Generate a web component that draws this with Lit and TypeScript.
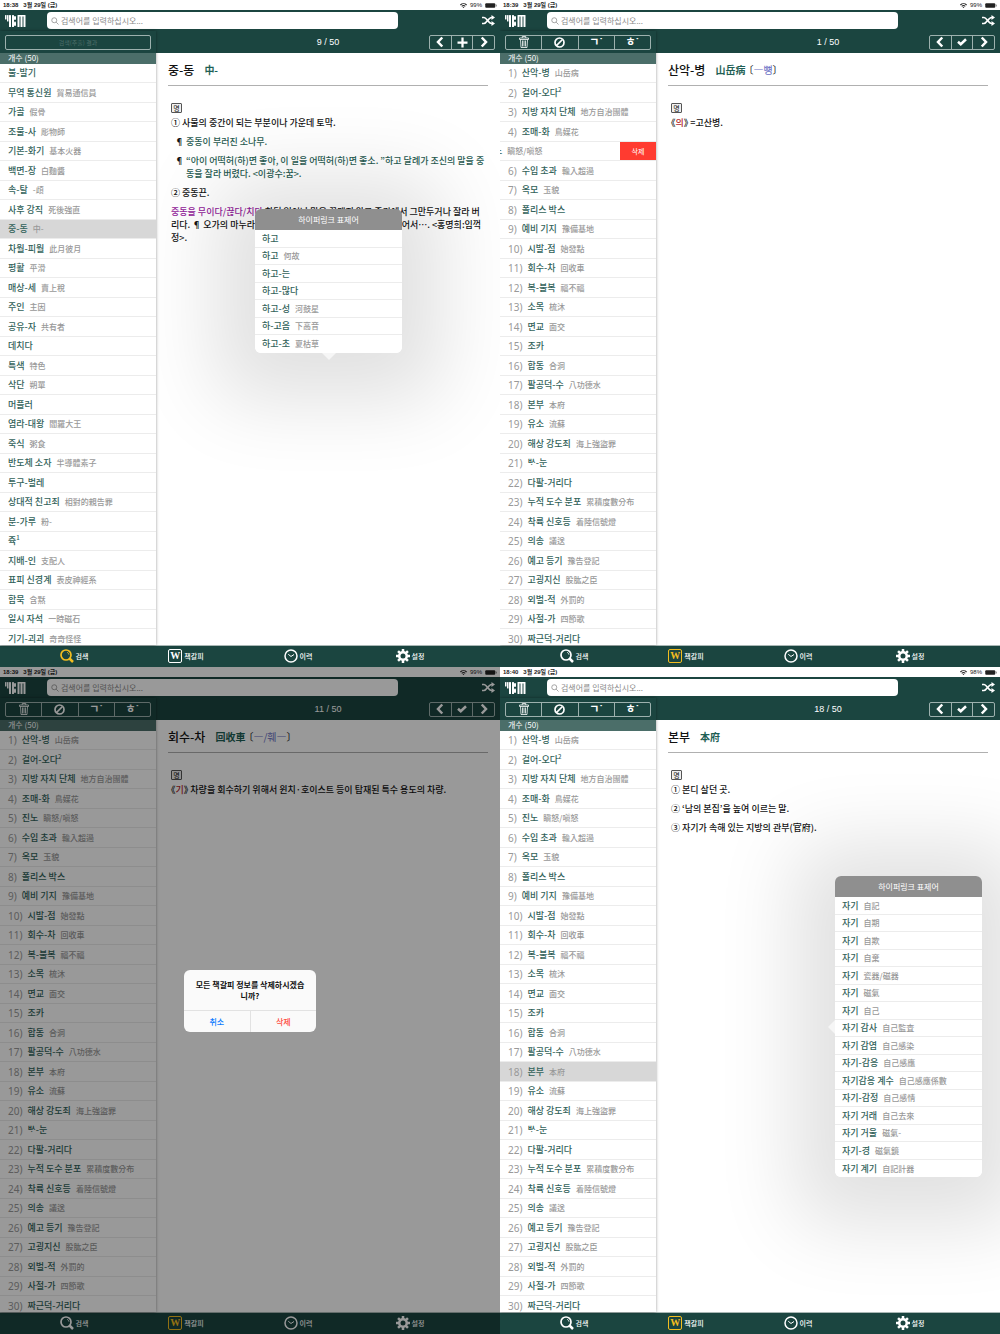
import { LitElement, html, css, svg, nothing } from "lit";
import { customElement, property } from "lit/decorators.js";
import { classMap } from "lit/directives/class-map.js";

type Entry = [word: string, hanja?: string, sup?: string];

interface ScreenData {
  time: string;
  battery: string;
  position: string;
  mode: "search" | "bookmark";
  entries: Entry[];
  selected?: number;
  swiped?: number;
  article: unknown;
  popover?: { kind: "below" | "side"; entries: Entry[] };
  confirm?: boolean;
}

const results: Entry[] = [
  ["불-발기"],
  ["무역 통신원", "貿易通信員"],
  ["가골", "假骨"],
  ["조물-사", "彫物師"],
  ["기본-화기", "基本火器"],
  ["백면-장", "白麵醬"],
  ["속-탈", "-頉"],
  ["사후 강직", "死後強直"],
  ["중-동", "中-"],
  ["차월-피월", "此月彼月"],
  ["평활", "平滑"],
  ["매상-세", "賣上稅"],
  ["주인", "主因"],
  ["공유-자", "共有者"],
  ["데치다"],
  ["특색", "特色"],
  ["삭단", "朔單"],
  ["머플러"],
  ["염라-대왕", "閻羅大王"],
  ["죽식", "粥食"],
  ["반도체 소자", "半導體素子"],
  ["투구-벌레"],
  ["상대적 친고죄", "相對的親告罪"],
  ["분-가루", "粉-"],
  ["쥭", "", "1"],
  ["지배-인", "支配人"],
  ["표피 신경계", "表皮神經系"],
  ["함묵", "含黙"],
  ["일시 자석", "一時磁石"],
  ["기기-괴괴", "奇奇怪怪"],
];

const bookmarks: Entry[] = [
  ["산악-병", "山岳病"],
  ["걸어-오다", "", "2"],
  ["지방 자치 단체", "地方自治團體"],
  ["조매-화", "鳥媒花"],
  ["진노", "瞋怒/嗔怒"],
  ["수입 초과", "輸入超過"],
  ["옥모", "玉貌"],
  ["폴리스 박스"],
  ["예비 기지", "豫備基地"],
  ["시발-점", "始發點"],
  ["회수-차", "回收車"],
  ["복-불복", "福不福"],
  ["소목", "梳沐"],
  ["면교", "面交"],
  ["조카"],
  ["합동", "合洞"],
  ["팔공덕-수", "八功德水"],
  ["본부", "本府"],
  ["유소", "流蘇"],
  ["해상 강도죄", "海上強盜罪"],
  ["ᄡᆞ-눈"],
  ["다팔-거리다"],
  ["누적 도수 분포", "累積度數分布"],
  ["착륙 신호등", "着陸信號燈"],
  ["의송", "議送"],
  ["예고 등기", "豫告登記"],
  ["고굉지신", "股肱之臣"],
  ["외벌-적", "外罰的"],
  ["사절-가", "四節歌"],
  ["짜근덕-거리다"],
];

const hagoLinks: Entry[] = [
  ["하고"],
  ["하고", "何故"],
  ["하고-는"],
  ["하고-많다"],
  ["하고-성", "河鼓星"],
  ["하-고음", "下高音"],
  ["하고-초", "夏枯草"],
];

const jagiLinks: Entry[] = [
  ["자기", "自記"],
  ["자기", "自期"],
  ["자기", "自欺"],
  ["자기", "自棄"],
  ["자기", "瓷器/磁器"],
  ["자기", "磁氣"],
  ["자기", "自己"],
  ["자기 감사", "自己監査"],
  ["자기 감염", "自己感染"],
  ["자기-감응", "自己感應"],
  ["자기감응 계수", "自己感應係數"],
  ["자기-감정", "自己感情"],
  ["자기 거래", "自己去來"],
  ["자기 거울", "磁氣-"],
  ["자기-경", "磁氣鏡"],
  ["자기 계기", "自記計器"],
];

const screens: ScreenData[] = [
  {
    time: "18:38",
    battery: "99%",
    position: "9 / 50",
    mode: "search",
    entries: results,
    selected: 8,
    article: html`
      <h1 class="title">중-동 <span class="origin">中-</span></h1>
      <div class="senses">
        <span class="pos">명</span>
        <p>① 사물의 중간이 되는 부분이나 가운데 토막.</p>
        <p class="example"><span>¶</span><span>중동이 부러진 소나무.</span></p>
        <p class="example">
          <span>¶</span
          ><span>“아이 어떡허(하)면 좋아, 이 일을 어떡허(하)면 좋소. ”하고 달례가 조신의 말을 중<br />동을 잘라 버렸다. &lt;이광수:꿈&gt;.</span>
        </p>
        <p>② 중동끈.</p>
        <p>
          <span class="idiom">중동을 무이다/끊다/치다</span> 하던 일이나 말을 끝맺지 않고 중간에서 그만두거나 잘라
          버리다. ¶ 오가의 마누라가 말 중동을 무이고 한참 동안 말없이 두어서…. &lt;홍명희:임꺽정&gt;.
        </p>
      </div>
    `,
    popover: { kind: "below", entries: hagoLinks },
  },
  {
    time: "18:39",
    battery: "99%",
    position: "1 / 50",
    mode: "bookmark",
    entries: bookmarks,
    swiped: 4,
    article: html`
      <h1 class="title">
        산악-병 <span class="origin">山岳病</span><span class="sound">〔<em>―뼝</em>〕</span>
      </h1>
      <div class="senses">
        <span class="pos">명</span>
        <p><span class="field">《<em>의</em>》</span> =고산병.</p>
      </div>
    `,
  },
  {
    time: "18:39",
    battery: "99%",
    position: "11 / 50",
    mode: "bookmark",
    entries: bookmarks,
    article: html`
      <h1 class="title">
        회수-차 <span class="origin">回收車</span><span class="sound">〔<em>―/훼―</em>〕</span>
      </h1>
      <div class="senses">
        <span class="pos">명</span>
        <p>
          <span class="field">《<em>기</em>》</span> 차량을 회수하기 위해서 윈치·호이스트 등이 탑재된 특수 용도의 차량.
        </p>
      </div>
    `,
    confirm: true,
  },
  {
    time: "18:40",
    battery: "98%",
    position: "18 / 50",
    mode: "bookmark",
    entries: bookmarks,
    selected: 17,
    article: html`
      <h1 class="title">본부 <span class="origin">本府</span></h1>
      <div class="senses">
        <span class="pos">명</span>
        <p>① 본디 살던 곳.</p>
        <p>② ‘남의 본집’을 높여 이르는 말.</p>
        <p>③ 자기가 속해 있는 지방의 관부(官府).</p>
      </div>
    `,
    popover: { kind: "side", entries: jagiLinks },
  },
];

const icon = (name: string, width: number, height: number, box: string, body: unknown) => html`
  <svg class="icon ${name}" width=${width} height=${height} viewBox=${box} aria-hidden="true">${body}</svg>
`;

const logo = icon(
  "logo", 21, 12, "0 0 42 24",
  svg`<g fill="currentColor">
    <rect x="0" y="0" width="3" height="9" rx="1"/>
    <rect x="4" y="0" width="3" height="13" rx="1"/>
    <rect x="8" y="0" width="4" height="24" rx="1"/>
    <rect x="14" y="0" width="4" height="24" rx="1"/>
    <rect x="18" y="2" width="4" height="8" rx="2"/>
    <rect x="18" y="13" width="4" height="9" rx="2"/>
    <rect x="25" y="0" width="4" height="24" rx="1"/>
    <rect x="31" y="0" width="4" height="24" rx="1"/>
    <rect x="37" y="0" width="4" height="24" rx="1"/>
    <rect x="26" y="0" width="14" height="3"/>
  </g>`,
);

const wifiIcon = icon(
  "wifi", 7, 5, "0 0 14 10",
  svg`<path d="M0 3.2a10 10 0 0 1 14 0l-1.6 1.7a7.6 7.6 0 0 0-10.8 0zM2.7 6a6.2 6.2 0 0 1 8.6 0L9.8 7.5a4 4 0 0 0-5.6 0zM5.200 8.400a2.600 2.600 0 0 1 3.600 0L7 10z" fill="currentColor"/>`,
);

const batteryIcon = icon(
  "battery", 12, 5, "0 0 24 10",
  svg`<rect x=".5" y=".5" width="20" height="9" rx="2" fill="currentColor"/><rect x="21.500" y="3" width="2" height="4" rx="1" fill="currentColor" opacity=".6"/>`,
);

const lensIcon = icon(
  "lens", 8, 8, "0 0 16 16",
  svg`<circle cx="6.500" cy="6.500" r="5" fill="none" stroke="currentColor" stroke-width="1.500"/><path d="M10.300 10.300 15 15" stroke="currentColor" stroke-width="1.500"/>`,
);

const shuffleIcon = icon(
  "shuffle", 13, 11, "0 0 26 22",
  svg`<g fill="none" stroke="currentColor" stroke-width="3.400"><path d="M0 5h4c5 0 9 12 15 12h3"/><path d="M0 17h4c5 0 9-12 15-12h3"/></g><path d="M19 0l7 5-7 5zM19 12l7 5-7 5z" fill="currentColor"/>`,
);

const leftIcon = icon("left", 10, 12, "0 0 20 24", svg`<path d="M14.500 3 6 12l8.500 9" fill="none" stroke="currentColor" stroke-width="5"/>`);
const rightIcon = icon("right", 10, 12, "0 0 20 24", svg`<path d="M5.500 3 14 12l-8.500 9" fill="none" stroke="currentColor" stroke-width="5"/>`);
const plusIcon = icon("plus", 11, 11, "0 0 22 22", svg`<path d="M11 1v20M1 11h20" stroke="currentColor" stroke-width="4.500"/>`);
const checkIcon = icon("check", 10, 8, "0 0 20 16", svg`<path d="M2 7.500 7.500 12.500 18 2.500" fill="none" stroke="currentColor" stroke-width="5"/>`);

const trashIcon = icon(
  "trash", 10, 12, "0 0 20 24",
  svg`<g fill="none" stroke="currentColor" stroke-width="1.600"><path d="M6.500 4V1h7v3M1 7V4h18v3zM3 7l1 16h12l1-16M7 9v12M10 9v12M13 9v12"/></g>`,
);

const banIcon = icon(
  "ban", 11, 11, "0 0 22 22",
  svg`<g fill="none" stroke="currentColor" stroke-width="3.400"><circle cx="11" cy="11" r="9"/><path d="M17 5 5 17"/></g>`,
);

const tabIcons = {
  search: icon(
    "tab-search", 14, 14, "0 0 28 28",
    svg`<g fill="none" stroke="currentColor"><circle cx="12" cy="12" r="10" stroke-width="3.400"/><path d="M14 6.500a6 6 0 0 1 4 5" stroke-width="1.500"/><path d="M19 19l7 7" stroke-width="5"/></g>`,
  ),
  bookmark: html`<span class="icon tab-mark" aria-hidden="true">W</span>`,
  history: icon(
    "tab-history", 14, 14, "0 0 28 28",
    svg`<g fill="none" stroke="currentColor"><circle cx="14" cy="14" r="12" stroke-width="3"/><path d="M8.500 10.500 14 15l6-4" stroke-width="2"/></g>`,
  ),
  settings: icon(
    "tab-settings", 14, 14, "0 0 28 28",
    svg`<g fill="none" stroke="currentColor"><circle cx="14" cy="14" r="7.500" stroke-width="5"/><path d="M14 0v6M14 22v6M0 14h6M22 14h6M4.100 4.100l4.300 4.300M19.600 19.600l4.300 4.300M4.100 23.900l4.300-4.300M19.600 8.400l4.300-4.300" stroke-width="5"/></g>`,
  ),
};

const shared = css`
  * {
    box-sizing: border-box;
  }
  button {
    margin: 0;
    padding: 0;
    border: 0;
    background: none;
    color: inherit;
    font: inherit;
    text-align: inherit;
  }
  .icon {
    display: block;
    flex: none;
  }
`;

@customElement("entry-label")
class EntryLabel extends LitElement {
  static styles = css`
    :host {
      display: flex;
      align-items: center;
      gap: 5px;
      white-space: nowrap;
      font-weight: 500;
      line-height: 12px;
    }
    .word {
      color: #32625a;
      font-size: 9px;
    }
    .hanja {
      color: #999;
      font-size: 8px;
    }
    sup {
      font-size: 6px;
      line-height: 0;
    }
  `;
  @property({ attribute: false }) entry: Entry = [""];

  render() {
    const [word, hanja, sup] = this.entry;
    return html`
      <span class="word">${word}${sup ? html`<sup>${sup}</sup>` : nothing}</span>
      ${hanja ? html`<span class="hanja">${hanja}</span>` : nothing}
    `;
  }
}

@customElement("link-popover")
class LinkPopover extends LitElement {
  static styles = [
    shared,
    css`
      :host {
        position: absolute;
        width: 147px;
        border-radius: 6px;
        box-shadow: 0 8px 80px 40px rgba(0, 0, 0, 0.12);
      }
      .heading {
        margin: 0;
        border-radius: 6px 6px 0 0;
        background: #8f8f8f;
        color: #fff;
        font-size: 8px;
        font-weight: 400;
        line-height: 21px;
        text-align: center;
      }
      .links {
        margin: 0;
        padding: 0;
        list-style: none;
        overflow: hidden;
        border-radius: 0 0 6px 6px;
        background: #fff;
      }
      .link {
        display: flex;
        align-items: center;
        width: 100%;
        height: 18px;
        padding: 0 7px;
        border-bottom: 1px solid #ececec;
      }
      li:nth-child(even) .link {
        height: 17px;
      }
      li:last-child .link {
        border-bottom: 0;
      }
      .arrow {
        position: absolute;
        border: 7px solid transparent;
      }
      .arrow.below {
        top: 100%;
        left: 50%;
        margin-left: -7px;
        border-top-color: #f6f6f6;
        border-bottom: 0;
      }
      .arrow.side {
        top: 50%;
        right: 100%;
        margin-top: -7px;
        border-right-color: #f6f6f6;
        border-left: 0;
      }
    `,
  ];
  @property() kind = "below";
  @property({ attribute: false }) entries: Entry[] = [];

  render() {
    return html`
      <h2 class="heading">하이퍼링크 표제어</h2>
      <ul class="links">
        ${this.entries.map(
          (entry) => html`<li><button class="link"><entry-label .entry=${entry}></entry-label></button></li>`,
        )}
      </ul>
      <span class=${classMap({ arrow: true, [this.kind]: true })}></span>
    `;
  }
}

@customElement("dictionary-screen")
class DictionaryScreen extends LitElement {
  static styles = [
    shared,
    css`
      :host {
        position: relative;
        display: flex;
        flex-direction: column;
        min-width: 0;
        min-height: 0;
        overflow: hidden;
        background: #fff;
      }
      .status {
        display: flex;
        align-items: center;
        gap: 5px;
        height: 10px;
        padding: 0 3px;
        color: #222;
        font-family: "Liberation Sans", "Noto Sans CJK KR", sans-serif;
        font-size: 6px;
        font-weight: 700;
        line-height: 10px;
      }
      .status .wifi {
        margin-left: auto;
      }
      .level {
        margin: 0 -2px;
        font-weight: 400;
      }
      .header {
        display: flex;
        align-items: center;
        height: 21px;
        padding: 0 5px;
        background: #1b4540;
        color: #fff;
      }
      .header .logo {
        margin-right: 21px;
      }
      .search {
        display: flex;
        flex: 1;
        align-items: center;
        gap: 2px;
        height: 17px;
        margin-right: 84px;
        padding: 0 4px;
        border-radius: 4px;
        background: #fff;
        color: #8a8a8a;
      }
      .search input {
        flex: 1;
        min-width: 0;
        height: 17px;
        padding: 0;
        border: 0;
        outline: 0;
        background: none;
        font: inherit;
        font-size: 8px;
      }
      .search input::placeholder {
        color: #8a8a8a;
      }
      .body {
        display: flex;
        flex: 1;
        min-height: 0;
      }
      .sidebar {
        z-index: 1;
        display: flex;
        flex: none;
        flex-direction: column;
        width: 156px;
        overflow: hidden;
        background: #fff;
        box-shadow: 0 0 3px rgba(0, 0, 0, 0.4);
      }
      .main {
        display: flex;
        flex: 1;
        flex-direction: column;
        min-width: 0;
      }
      .toolbar {
        display: flex;
        flex: none;
        align-items: center;
        height: 22px;
        padding: 0 5px;
        background: #1b4540;
        color: #fff;
      }
      .main .toolbar {
        display: grid;
        grid-template-columns: 1fr auto 1fr;
      }
      .group {
        display: flex;
        flex: 1;
        height: 15px;
        border: 1px solid #9db1ae;
        border-radius: 2px;
      }
      .group.nav {
        justify-self: end;
        width: 66px;
      }
      .group button {
        display: flex;
        flex: 1;
        align-items: center;
        justify-content: center;
      }
      .group button + button {
        border-left: 1px solid #9db1ae;
      }
      .caption {
        color: #4d6f6a;
        font-size: 6px;
      }
      .jamo {
        font-family: "Liberation Sans", "Noto Sans CJK KR", sans-serif;
        font-size: 11px;
        font-weight: 700;
        line-height: 13px;
      }
      .position {
        grid-column: 2;
        font-family: "Liberation Sans", sans-serif;
        font-size: 9px;
      }
      .count {
        flex: none;
        height: 11px;
        margin: 0;
        padding: 0 8px;
        background: #4b6e69;
        color: #fff;
        font-size: 8px;
        font-weight: 400;
        line-height: 10px;
      }
      .list {
        flex: 1;
        min-height: 0;
        margin: 0;
        padding: 0;
        overflow: hidden;
        list-style: none;
      }
      .item {
        display: flex;
        height: 20px;
        border-bottom: 1px solid #ececec;
      }
      .item:nth-child(odd) {
        height: 19px;
      }
      .item.selected {
        background: #d7d7d7;
      }
      .row {
        display: flex;
        flex: 1;
        align-items: center;
        gap: 5px;
        min-width: 0;
        padding: 0 8px;
      }
      .swiped .row {
        margin-left: -36px;
      }
      .number {
        color: #999;
        font-family: "Noto Sans", sans-serif;
        font-size: 10px;
        line-height: 12px;
      }
      .delete {
        width: 36px;
        background: #ff3b30;
        color: #fff;
        font-size: 7px;
        text-align: center;
      }
      .pane {
        position: relative;
        flex: 1;
        min-height: 0;
        overflow: hidden;
        padding: 0 12px;
        color: #111;
      }
      .title {
        display: flex;
        align-items: center;
        height: 33px;
        margin: 0 0 17px;
        border-bottom: 1px solid #b0b0b0;
        font-size: 12px;
        font-weight: 500;
      }
      .origin {
        margin-left: 10px;
        color: #1f5f55;
        font-size: 10px;
        font-weight: 700;
      }
      .sound {
        margin-left: 3px;
        font-size: 10px;
        font-weight: 400;
        font-feature-settings: "halt";
      }
      em {
        font-style: normal;
      }
      .sound em {
        color: #6a6fc4;
      }
      .senses {
        display: flex;
        flex-direction: column;
        gap: 6px;
        padding: 0 0 0 3px;
        font-size: 9px;
        font-weight: 500;
        line-height: 13px;
      }
      .pos {
        width: 11px;
        height: 10px;
        margin-bottom: -3px;
        border: 1px solid #555;
        border-radius: 1px;
        background: #f0f0f0;
        font-size: 7px;
        font-weight: 400;
        line-height: 8px;
        text-align: center;
      }
      p {
        margin: 0;
      }
      .example {
        display: flex;
        gap: 2px;
        padding-left: 4px;
        color: #1f5a50;
      }
      .example span:first-child {
        color: #111;
      }
      .idiom {
        color: #92219a;
      }
      .field {
        font-feature-settings: "halt";
      }
      .field em {
        color: #b3262b;
      }
      link-popover.below {
        top: 156px;
        left: 99px;
      }
      link-popover.side {
        top: 156px;
        right: 18px;
      }
      .tabs {
        display: grid;
        flex: none;
        grid-template-columns: repeat(4, 1fr);
        height: 22px;
        padding: 0 34px 1px 18px;
        border-top: 1px solid #a9b7b5;
        background: #1b4540;
        color: #fff;
      }
      .tab {
        display: flex;
        align-items: center;
        justify-content: center;
        gap: 2px;
        font-size: 7px;
        font-weight: 500;
      }
      .tab.active .icon {
        color: #f3bd1f;
      }
      .tab-mark {
        width: 14px;
        height: 14px;
        border: 1px solid currentColor;
        border-radius: 2px;
        font-family: "Liberation Serif", serif;
        font-size: 10px;
        font-weight: 700;
        line-height: 12px;
        text-align: center;
      }
      .shade {
        position: absolute;
        inset: 0;
        z-index: 2;
        display: flex;
        align-items: center;
        justify-content: center;
        background: rgba(0, 0, 0, 0.4);
      }
      .alert {
        width: 132px;
        overflow: hidden;
        border-radius: 6px;
        background: #fafafa;
        color: #111;
      }
      .message {
        padding: 9px 10px;
        font-size: 8px;
        font-weight: 700;
        line-height: 11px;
        text-align: center;
      }
      .actions {
        display: flex;
        height: 22px;
        border-top: 1px solid #e2e2e2;
      }
      .actions button {
        flex: 1;
        font-size: 8px;
        font-weight: 500;
        text-align: center;
      }
      .cancel {
        color: #0a7aff;
      }
      .actions .confirm {
        border-left: 1px solid #e2e2e2;
        color: #ff4a40;
      }
    `,
  ];
  @property({ attribute: false }) data!: ScreenData;

  private renderFilters() {
    if (this.data.mode === "search") {
      return html`<div class="group"><button><span class="caption">검색(추출) 결과</span></button></div>`;
    }
    return html`
      <div class="group">
        <button aria-label="삭제">${trashIcon}</button>
        <button aria-label="해제">${banIcon}</button>
        <button><span class="jamo">ㄱ˙</span></button>
        <button><span class="jamo">ㅎ˙</span></button>
      </div>
    `;
  }

  private renderItem(entry: Entry, index: number) {
    const { mode, selected, swiped } = this.data;
    return html`
      <li class=${classMap({ item: true, selected: index === selected, swiped: index === swiped })}>
        <button class="row">
          ${mode === "bookmark" ? html`<span class="number">${index + 1})</span>` : nothing}
          <entry-label .entry=${entry}></entry-label>
        </button>
        ${index === swiped ? html`<button class="delete">삭제</button>` : nothing}
      </li>
    `;
  }

  private renderTab(name: keyof typeof tabIcons, label: string) {
    return html`
      <button class=${classMap({ tab: true, active: this.data.mode === name })}>${tabIcons[name]}${label}</button>
    `;
  }

  render() {
    const { time, battery, position, mode, entries, article, popover, confirm } = this.data;
    return html`
      <div class="status">
        <span>${time}</span><span>3월 29일 (금)</span>${wifiIcon}<span class="level">${battery}</span>${batteryIcon}
      </div>
      <header class="header">
        ${logo}
        <label class="search">
          ${lensIcon}<input type="text" placeholder="검색어를 입력하십시오..." aria-label="검색어" />
        </label>
        <button aria-label="무작위">${shuffleIcon}</button>
      </header>
      <div class="body">
        <aside class="sidebar">
          <div class="toolbar">${this.renderFilters()}</div>
          <h2 class="count">개수 (50)</h2>
          <ul class="list">
            ${entries.map((entry, index) => this.renderItem(entry, index))}
          </ul>
        </aside>
        <main class="main">
          <div class="toolbar">
            <span class="position">${position}</span>
            <div class="group nav">
              <button aria-label="이전">${leftIcon}</button>
              <button aria-label="책갈피">${mode === "search" ? plusIcon : checkIcon}</button>
              <button aria-label="다음">${rightIcon}</button>
            </div>
          </div>
          <article class="pane">
            ${article}
            ${popover
              ? html`<link-popover class=${popover.kind} kind=${popover.kind} .entries=${popover.entries}></link-popover>`
              : nothing}
          </article>
        </main>
      </div>
      <nav class="tabs">
        ${this.renderTab("search", "검색")} ${this.renderTab("bookmark", "책갈피")}
        ${this.renderTab("history", "이력")} ${this.renderTab("settings", "설정")}
      </nav>
      ${confirm
        ? html`
            <div class="shade">
              <div class="alert" role="alertdialog">
                <div class="message">모든 책갈피 정보를 삭제하시겠습니까?</div>
                <div class="actions">
                  <button class="cancel">취소</button>
                  <button class="confirm">삭제</button>
                </div>
              </div>
            </div>
          `
        : nothing}
    `;
  }
}

@customElement("app-root")
class AppRoot extends LitElement {
  static styles = css`
    :host {
      display: grid;
      grid-template-columns: repeat(2, minmax(0, 1fr));
      grid-template-rows: repeat(2, minmax(0, 1fr));
      height: 100vh;
      font-family: "Noto Sans CJK KR", "Noto Sans", sans-serif;
    }
  `;

  render() {
    return screens.map((data) => html`<dictionary-screen .data=${data}></dictionary-screen>`);
  }
}
